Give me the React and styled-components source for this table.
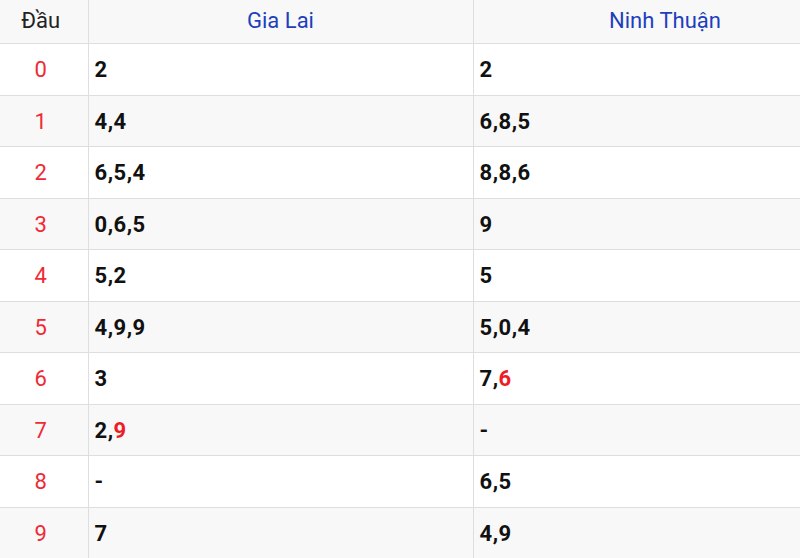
import React from 'react'
import styled, { createGlobalStyle } from 'styled-components'

const rows = [
  ['2', '2'],
  ['4,4', '6,8,5'],
  ['6,5,4', '8,8,6'],
  ['0,6,5', '9'],
  ['5,2', '5'],
  ['4,9,9', '5,0,4'],
  ['3', '7,*6'],
  ['2,*9', '-'],
  ['-', '6,5'],
  ['7', '4,9'],
]

// "*" marks a number shown in red
function Loto({ value }) {
  const parts = value.split(',')
  return parts.map((p, i) => (
    <React.Fragment key={i}>
      {i > 0 && ','}
      {p.startsWith('*') ? <Hot>{p.slice(1)}</Hot> : p}
    </React.Fragment>
  ))
}

export default function App() {
  return (
    <>
      <GlobalStyle />
      <Wrapper>
        <Table>
          <colgroup>
            <col width='88' />
            <col width='385' />
            <col width='384' />
          </colgroup>
          <thead>
            <HeadRow>
              <HeadCell>Đầu</HeadCell>
              <HeadCell province>Gia Lai</HeadCell>
              <HeadCell province>Ninh Thuận</HeadCell>
            </HeadRow>
          </thead>
          <tbody>
            {rows.map((r, i) => (
              <Row key={i} striped={i % 2 === 1}>
                <IndexCell>{i}</IndexCell>
                <NumCell>
                  <Loto value={r[0]} />
                </NumCell>
                <NumCell>
                  <Loto value={r[1]} />
                </NumCell>
              </Row>
            ))}
          </tbody>
        </Table>
      </Wrapper>
    </>
  )
}

const GlobalStyle = createGlobalStyle`
  html, body {
    margin: 0;
    padding: 0;
    background: #fff;
    overflow: hidden;
  }
  body {
    font-family: Roboto, "Liberation Sans", Arial, sans-serif;
  }
`

const Wrapper = styled.div`
  width: 800px;
  height: 558px;
  overflow: hidden;
`

const Table = styled.table`
  width: 857px;
  table-layout: fixed;
  border-collapse: collapse;
  font-size: 22px;
  color: #111;
  td,
  th {
    border: 1px solid #dedede;
    line-height: 24px;
  }
  tr > :first-child {
    border-left: none;
  }
  thead th {
    border-top: none;
  }
`

const HeadRow = styled.tr`
  height: 43.5px;
`

const HeadCell = styled.th`
  padding: 0 ${props => (props.province ? '0' : '6px')} 2px 0;
  background: #f8f8f8;
  font-size: 22px;
  font-weight: 400;
  text-align: center;
  color: ${props => (props.province ? '#1d3fbd' : '#222')};
`

const Row = styled.tr`
  height: 51.5px;
  background: ${props => (props.striped ? '#f8f8f8' : '#fff')};
`

const IndexCell = styled.td`
  padding: 2px 6px 0 0;
  text-align: center;
  color: #ee2a36;
`

const NumCell = styled.td`
  padding: 2px 0 0 6px;
  font-weight: 700;
  letter-spacing: 0.5px;
  color: #111;
`

const Hot = styled.span`
  color: #ee1c25;
`
